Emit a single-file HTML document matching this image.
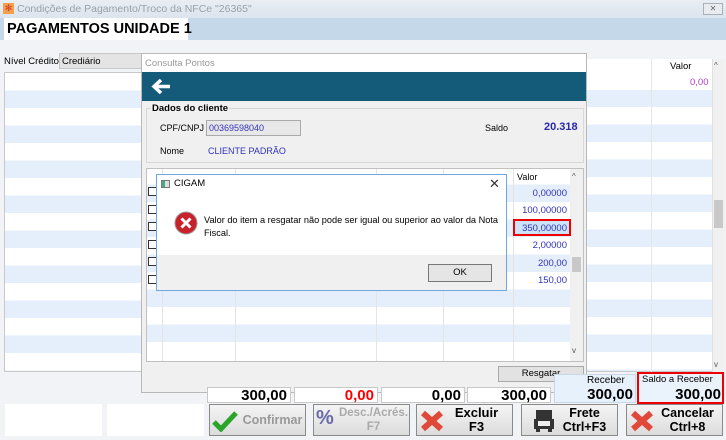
<!DOCTYPE html>
<html><head><meta charset="utf-8"><style>
*{box-sizing:border-box;margin:0;padding:0}
body{width:726px;height:440px;overflow:hidden;background:#f2f3f7;font-family:"Liberation Sans",sans-serif;font-size:11px;position:relative;white-space:nowrap}
.a{position:absolute}
.rows{background:repeating-linear-gradient(#fff 0 17.5px,#e4effb 17.5px 35px)}
.btn{position:absolute;top:404px;height:32px;width:97px;border:1px solid #8a8a8a;background:linear-gradient(#f4f4f4,#dcdcdc);font-weight:bold;font-size:13px;text-align:center;line-height:14px}
.tot{position:absolute;top:387px;height:16px;background:#fff;border:1px solid #c8c8c8;text-align:right;font-weight:bold;font-size:15px;line-height:15px;padding-right:3px}
.cb{position:absolute;left:148px;width:9px;height:9px;border:1px solid #333;background:#fff}
.v{position:absolute;left:513px;width:54px;text-align:right;color:#3333bb;font-size:9.5px}
</style></head><body>
<div class="a" style="left:0;top:0;width:726px;height:18px;background:linear-gradient(#e9eef4,#dce4ee)"></div>
<div class="a" style="left:3px;top:3px;width:11px;height:11px;background:#f4a04a;color:#c33;font-size:9px;line-height:11px;text-align:center">✻</div>
<div class="a" style="left:17px;top:3px;color:#9aa0a8;font-size:10.5px">Condições de Pagamento/Troco da NFCe "26365"</div>
<div class="a" style="left:703px;top:3px;width:20px;height:12px;border:1px solid #a8b0b8;background:#e8ecf0;font-size:8px;text-align:center;color:#666">✕</div>
<div class="a" style="left:0;top:18px;width:726px;height:22px;background:#c4d8ea"></div>
<div class="a" style="left:4px;top:18px;width:184px;height:22px;background:#fff;font-weight:bold;font-size:14.5px;padding:3px 0 0 3px">PAGAMENTOS UNIDADE 1</div>
<div class="a" style="left:4px;top:56px;font-size:9.5px">Nível Crédito</div>
<div class="a" style="left:59px;top:53px;width:90px;height:16px;background:#e4e4e4;border:1px solid #c8c8c8;font-size:9.5px;padding:2px 0 0 2px">Crediário</div>
<div class="a rows" style="left:4px;top:72px;width:140px;height:300px;border:1px solid #c8c8c8"></div>
<div class="a rows" style="left:585px;top:72px;width:127px;height:300px;border-bottom:1px solid #c8c8c8"></div>
<div class="a" style="left:585px;top:59px;width:127px;height:31px;background:#fff"></div>
<div class="a" style="left:651px;top:59px;width:1px;height:313px;background:#e6e6e6"></div>
<div class="a" style="left:670px;top:61px;font-size:9.5px">Valor</div>
<div class="a" style="left:690px;top:77px;font-size:9.5px;color:#b040c0">0,00</div>
<div class="a" style="left:712px;top:59px;width:13px;height:314px;background:#f0f0f0;border-left:1px solid #e0e0e0"></div>
<div class="a" style="left:714px;top:200px;width:9px;height:28px;background:#c8c8c8"></div>
<div class="a" style="left:714px;top:61px;font-size:8px;color:#555">^</div>
<div class="a" style="left:714px;top:360px;font-size:8px;color:#555">v</div>
<div class="a" style="left:141px;top:53px;width:446px;height:340px;background:#f0f0f0;border:1px solid #b8b8b8"></div>
<div class="a" style="left:142px;top:54px;width:444px;height:18px;background:#fff;color:#999;font-size:9.5px;padding:4px 0 0 3px">Consulta Pontos</div>
<div class="a" style="left:142px;top:72px;width:444px;height:29px;background:#145a79"></div>
<svg class="a" style="left:150px;top:78px" width="22" height="17"><path d="M20 8.5H5M11 2L4 8.5L11 15" stroke="#fff" stroke-width="3.5" fill="none"/></svg>
<div class="a" style="left:146px;top:108px;width:438px;height:55px;border:1px solid #d8d8d8"></div>
<div class="a" style="left:151px;top:103px;font-weight:bold;font-size:9.5px;background:#f0f0f0;padding:0 1px">Dados do cliente</div>
<div class="a" style="left:160px;top:123px;font-size:9px">CPF/CNPJ</div>
<div class="a" style="left:206px;top:120px;width:95px;height:16px;background:#e8e8e8;border:1px solid #aaa;color:#3333bb;font-size:9px;padding:2px 0 0 2px">00369598040</div>
<div class="a" style="left:160px;top:146px;font-size:9px">Nome</div>
<div class="a" style="left:208px;top:146px;font-size:9px;color:#3333bb">CLIENTE PADRÃO</div>
<div class="a" style="left:485px;top:123px;font-size:9px">Saldo</div>
<div class="a" style="left:544px;top:121px;font-size:11px;font-weight:bold;color:#2828aa">20.318</div>
<div class="a rows" style="left:146px;top:168px;width:438px;height:194px;border:1px solid #c0c0c0;background-position:0 -2px"></div>
<div class="a" style="left:147px;top:169px;width:423px;height:15px;background:#fff"></div>
<div class="a" style="left:162px;top:169px;width:1px;height:192px;background:#e4e4e4"></div>
<div class="a" style="left:235px;top:169px;width:1px;height:192px;background:#e4e4e4"></div>
<div class="a" style="left:376px;top:169px;width:1px;height:192px;background:#e4e4e4"></div>
<div class="a" style="left:443px;top:169px;width:1px;height:192px;background:#e4e4e4"></div>
<div class="a" style="left:513px;top:169px;width:1px;height:192px;background:#e4e4e4"></div>
<div class="a" style="left:517px;top:172px;font-size:9px">Valor</div>
<div class="a" style="left:570px;top:169px;width:13px;height:192px;background:#f0f0f0"></div>
<div class="a" style="left:572px;top:257px;width:9px;height:15px;background:#c8c8c8"></div>
<div class="a" style="left:572px;top:172px;font-size:8px;color:#555">^</div>
<div class="a" style="left:572px;top:346px;font-size:8px;color:#555">v</div>
<div class="cb" style="top:187px"></div><div class="cb" style="top:205px"></div><div class="cb" style="top:222px"></div><div class="cb" style="top:240px"></div><div class="cb" style="top:257px"></div><div class="cb" style="top:275px"></div>
<div class="v" style="top:188px">0,00000</div>
<div class="v" style="top:205px">100,00000</div>
<div class="a" style="left:513px;top:219px;width:58px;height:17px;border:2px solid #e00;background:#cce4f8"></div>
<div class="v" style="top:223px">350,00000</div>
<div class="v" style="top:240px">2,00000</div>
<div class="v" style="top:258px">200,00</div>
<div class="v" style="top:275px">150,00</div>
<div class="a" style="left:498px;top:366px;width:86px;height:16px;border:1px solid #aaa;background:#e2e2e2;font-size:9.5px;text-align:center;line-height:13px">Resgatar</div>
<div class="a" style="left:156px;top:174px;width:351px;height:117px;background:#fff;border:1px solid #6fa6dc"></div>
<div class="a" style="left:161px;top:180px;width:9px;height:8px;border:1px solid #777;background:linear-gradient(90deg,#4a8 0 3px,#ddd 3px)"></div>
<div class="a" style="left:174px;top:178px;font-size:9.5px">CIGAM</div>
<div class="a" style="left:489px;top:176px;font-size:13px;color:#333">✕</div>
<div class="a" style="left:157px;top:255px;width:349px;height:35px;background:#f0f0f0"></div>
<svg class="a" style="left:174px;top:211px" width="24" height="24"><circle cx="12" cy="12" r="11" fill="#c9202a" stroke="#999" stroke-width="1"/><path d="M7.5 7.5L16.5 16.5M16.5 7.5L7.5 16.5" stroke="#fff" stroke-width="3"/></svg>
<div class="a" style="left:204px;top:214px;font-size:9.2px;line-height:13px">Valor do item a resgatar não pode ser igual ou superior ao valor da Nota<br>Fiscal.</div>
<div class="a" style="left:428px;top:264px;width:64px;height:18px;border:1px solid #777;background:#e5e5e5;font-size:9.5px;text-align:center;line-height:16px">OK</div>
<div class="tot" style="left:207px;width:84px">300,00</div>
<div class="tot" style="left:294px;width:84px;color:#f00">0,00</div>
<div class="tot" style="left:381px;width:84px">0,00</div>
<div class="tot" style="left:467px;width:84px">300,00</div>
<div class="a" style="left:554px;top:374px;width:82px;height:29px;background:#e6f1fb;border:1px solid #c8d8e8;overflow:hidden"><div style="position:absolute;left:32px;top:0;font-size:10px">Receber</div><div style="position:absolute;right:2px;top:11px;font-weight:bold;font-size:15px">300,00</div></div>
<div class="a" style="left:637px;top:372px;width:87px;height:32px;border:2px solid #e00;background:#eaf3fc"></div>
<div class="a" style="left:642px;top:374px;font-size:9.5px">Saldo a Receber</div>
<div class="a" style="left:637px;top:386px;width:84px;text-align:right;font-weight:bold;font-size:15px">300,00</div>
<div class="a" style="left:5px;top:404px;width:97px;height:32px;background:#fff"></div>
<div class="a" style="left:107px;top:404px;width:97px;height:32px;background:#fff"></div>
<div class="btn" style="left:209px;color:#999;line-height:30px;padding-left:30px;font-size:12.5px">Confirmar</div>
<svg class="a" style="left:212px;top:410px" width="26" height="22"><path d="M2 12L9 19L24 3" stroke="#2aa52a" stroke-width="5" fill="none"/></svg>
<div class="btn" style="left:313px;color:#aaa;padding:1px 0 0 24px;font-size:11.5px">Desc./Acrés.<br>F7</div>
<div class="a" style="left:316px;top:407px;font-size:20px;font-weight:bold;color:#6a6aaa">%</div>
<div class="btn" style="left:416px;padding:1px 0 0 24px">Excluir<br>F3</div>
<svg class="a" style="left:420px;top:410px" width="24" height="22"><path d="M3 3L21 19M21 3L3 19" stroke="#e0483a" stroke-width="6"/></svg>
<div class="btn" style="left:521px;padding:1px 0 0 30px;font-size:12.5px">Frete<br>Ctrl+F3</div>
<svg class="a" style="left:533px;top:409px" width="22" height="24"><rect x="3" y="1" width="16" height="9" fill="#333"/><rect x="1" y="10" width="20" height="10" fill="#333"/><rect x="5" y="12" width="12" height="5" fill="#eee"/><rect x="3" y="20" width="4" height="3" fill="#333"/><rect x="15" y="20" width="4" height="3" fill="#333"/></svg>
<div class="btn" style="left:626px;padding:1px 0 0 26px;font-size:12.5px">Cancelar<br>Ctrl+8</div>
<svg class="a" style="left:630px;top:410px" width="24" height="22"><path d="M3 3L21 19M21 3L3 19" stroke="#e0483a" stroke-width="6"/></svg>
</body></html>
